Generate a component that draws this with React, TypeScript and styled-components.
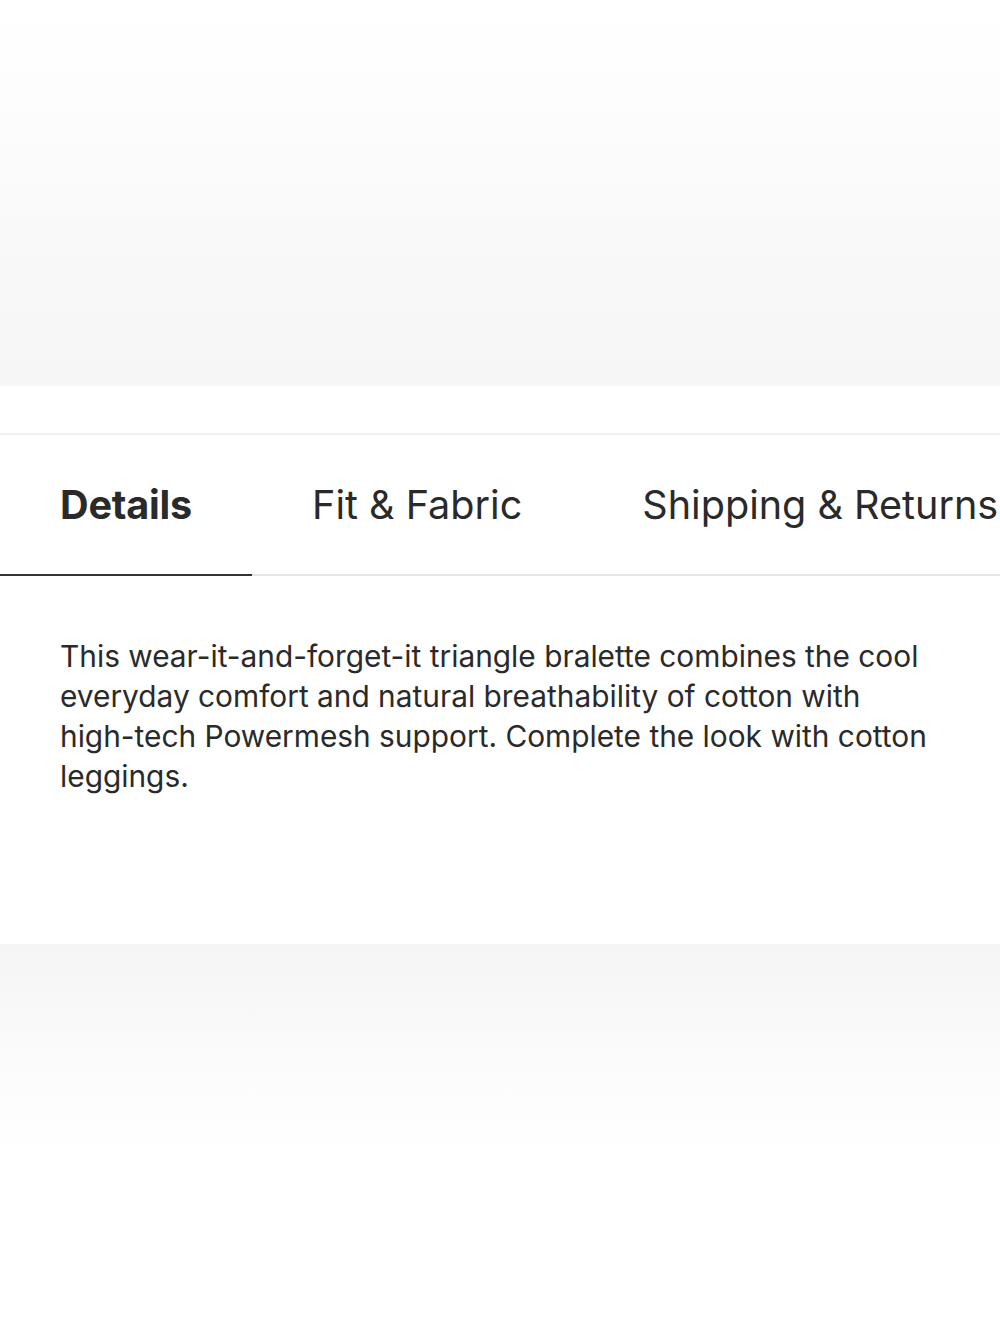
import React, { useState } from "react";
import styled, { createGlobalStyle } from "styled-components";

const GlobalStyle = createGlobalStyle`
  html, body {
    margin: 0;
    padding: 0;
    background: #ffffff;
  }
  body {
    font-family: Inter, "Noto Sans", "Liberation Sans", sans-serif;
    color: #2a2a2a;
    -webkit-font-smoothing: antialiased;
  }
`;

const Page = styled.div`
  width: 1000px;
  min-height: 1333px;
  display: flex;
  flex-direction: column;
  overflow: hidden;
  background: #ffffff;
`;

const ProductImage = styled.div`
  height: 386px;
  background: linear-gradient(
    180deg,
    #ffffff 0%,
    #fdfdfd 25%,
    #f9f9f9 60%,
    #f6f6f6 100%
  );
`;

const ImageGap = styled.div`
  height: 47px;
  background: #ffffff;
`;

const InfoSection = styled.section`
  border-top: 2px solid #f0f0f0;
  display: flex;
  flex-direction: column;
`;

const TabList = styled.div`
  display: flex;
  height: 139px;
  border-bottom: 2px solid #e6e6e6;
  white-space: nowrap;
`;

const Tab = styled.button<{ $active?: boolean }>`
  appearance: none;
  border: none;
  background: none;
  margin: 0 0 -2px 0;
  padding: 0 60px;
  display: flex;
  align-items: center;
  font-family: Inter, "Noto Sans", "Liberation Sans", sans-serif;
  font-size: 39.6px;
  font-weight: ${(p) => (p.$active ? 700 : 400)};
  letter-spacing: ${(p) => (p.$active ? "-0.2px" : "0")};
  color: #2a2a2a;
  border-bottom: 2px solid ${(p) => (p.$active ? "#333333" : "transparent")};
  cursor: pointer;
  flex-shrink: 0;
`;

const Panel = styled.div`
  height: 368px;
  padding: 60px 60px 0 60px;
  box-sizing: border-box;
`;

const Description = styled.p`
  margin: 0;
  font-size: 29.85px;
  line-height: 40px;
  color: #2a2a2a;
  max-width: 872px;
`;

const LowerImage = styled.div`
  flex: 1;
  background: linear-gradient(
    180deg,
    #f5f5f5 0%,
    #f8f8f8 15%,
    #fcfcfc 35%,
    #ffffff 55%,
    #ffffff 100%
  );
`;

const tabs = ["Details", "Fit & Fabric", "Shipping & Returns"];

export default function App() {
  const [active, setActive] = useState(0);
  return (
    <>
      <GlobalStyle />
      <Page>
        <ProductImage />
        <ImageGap />
        <InfoSection>
          <TabList>
            {tabs.map((t, i) => (
              <Tab key={t} $active={i === active} onClick={() => setActive(i)}>
                {t}
              </Tab>
            ))}
          </TabList>
          <Panel>
            <Description>
              This wear-it-and-forget-it triangle bralette combines the cool
              everyday comfort and natural breathability of cotton with
              high-tech Powermesh support. Complete the look with cotton
              leggings.
            </Description>
          </Panel>
        </InfoSection>
        <LowerImage />
      </Page>
    </>
  );
}
